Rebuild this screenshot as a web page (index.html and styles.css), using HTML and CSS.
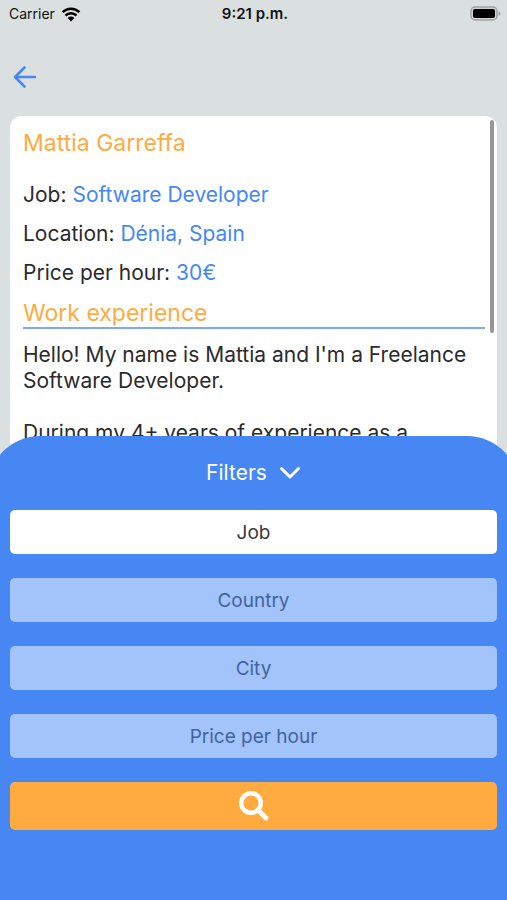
FILE: index.html
```html
<!DOCTYPE html>
<html lang="en">
<head>
<meta charset="utf-8">
<meta name="viewport" content="width=device-width, initial-scale=1">
<title>Profile</title>
<link rel="stylesheet" href="styles.css">
</head>
<body>
<div class="screen">
  <div class="status">
    <div class="carrier">Carrier
      <svg width="20" height="15" viewBox="0 0 20 15" aria-hidden="true"><g fill="none" stroke="#000" stroke-width="2.5"><path d="M1.6 5.2a12 12 0 0 1 16.8 0"/><path d="M4.5 8.5a8 8 0 0 1 11 0"/></g><path d="M6.7 11a5 5 0 0 1 6.6 0L10 14.5z"/></svg>
    </div>
    <time class="clock">9:21 p.m.</time>
    <svg class="battery" width="31" height="16" viewBox="0 0 31 16" aria-hidden="true"><rect x="1" y="1" width="26" height="13" rx="4" fill="#cfd2d1" stroke="#a3a5a5" stroke-width="1.5"/><rect x="3" y="3" width="22" height="9" rx="2"/><path d="M28.500 5q2 1 2 2.500t-2 2.500z" fill="#a3a5a5"/></svg>
  </div>
  <nav class="nav">
    <button class="back" type="button" aria-label="Back">
      <svg width="24" height="24" viewBox="0 0 24 24" fill="none" stroke="#4687f4" stroke-width="2.600" stroke-linecap="round" stroke-linejoin="round"><path d="M11.500 2.500 2 12l9.500 9.500M2 12h20"/></svg>
    </button>
  </nav>
  <main class="card">
    <h1 class="heading">Mattia Garreffa</h1>
    <dl class="facts">
      <div><dt>Job:</dt> <dd>Software Developer</dd></div>
      <div><dt>Location:</dt> <dd>Dénia, Spain</dd></div>
      <div><dt>Price per hour:</dt> <dd>30€</dd></div>
    </dl>
    <h2 class="heading section">Work experience</h2>
    <p>Hello! My name is Mattia and I'm a Freelance Software Developer.</p>
    <p>During my 4+ years of experience as a</p>
    <span class="scrollbar"></span>
  </main>
  <form class="sheet">
    <button class="toggle" type="button">Filters
      <svg width="22" height="14" viewBox="0 0 22 14" fill="none" stroke="#fff" stroke-width="3" stroke-linecap="round" stroke-linejoin="round" aria-hidden="true"><path d="m2.500 2.500 8.500 8.500 8.500-8.500"/></svg>
    </button>
    <input class="field" type="text" aria-label="Job" placeholder="Job">
    <input class="field" type="text" aria-label="Country" placeholder="Country" disabled>
    <input class="field" type="text" aria-label="City" placeholder="City" disabled>
    <input class="field" type="text" aria-label="Price per hour" placeholder="Price per hour" disabled>
    <button class="search" type="submit" aria-label="Search">
      <svg width="32" height="32" viewBox="0 0 32 32" fill="none" stroke="#fff"><circle cx="13" cy="13" r="9.800" stroke-width="4.400"/><path d="m20.500 20.500 7.500 7.500" stroke-width="5" stroke-linecap="round"/></svg>
    </button>
  </form>
</div>
</body>
</html>
```
FILE: styles.css
```css
* { box-sizing: border-box; }
body {
  margin: 0;
  font-family: Inter, "Liberation Sans", sans-serif;
  font-size: 21px;
  line-height: 26px;
  color: #2b2b2b;
}
button, input { font: inherit; border: 0; margin: 0; }
button { padding: 0; background: none; cursor: pointer; }
svg { display: block; }
.screen {
  display: flex;
  flex-direction: column;
  height: 100vh;
  overflow: hidden;
  background: #dae0df;
}
.status {
  display: grid;
  grid-template-columns: 1fr auto 1fr;
  align-items: center;
  height: 28px;
  flex: none;
  padding: 0 6px 0 9px;
  font-size: 14px;
  color: #111;
}
.carrier { display: flex; align-items: center; gap: 6px; }
.clock { font-size: 15px; font-weight: 600; }
.battery { justify-self: end; }
.nav { display: flex; align-items: center; flex: none; height: 88px; padding: 10px 13px 0; }
.card {
  position: relative;
  flex: 1;
  min-height: 0;
  overflow: hidden;
  margin: 0 10px;
  padding: 13px 12px 0 13px;
  background: #fff;
  border-radius: 12px;
}
.heading { margin: 0; font-size: 23px; font-weight: 400; line-height: 28px; color: #ffab40; }
.facts { display: grid; gap: 13px; margin: 25px 0 13px; }
.facts dt, .facts dd { display: inline; margin: 0; }
.facts dd { color: #4687f4; }
.section { border-bottom: 2px solid #7ba9f7; }
.card p { margin: 0 0 26px; }
.section + p { margin-top: 13px; }
.scrollbar {
  position: absolute;
  top: 4px;
  right: 3px;
  width: 4px;
  height: 213px;
  border-radius: 2px;
  background: #969696;
}
.sheet {
  position: relative;
  display: flex;
  flex-direction: column;
  flex: none;
  gap: 24px;
  margin: -24px -12px 0;
  padding: 24px 22px 70px;
  background: #4687f4;
  border-radius: 52px 52px 0 0;
}
.toggle { display: flex; align-items: center; align-self: center; gap: 12px; color: #fff; }
.field {
  width: 100%;
  height: 44px;
  padding: 0 12px;
  border-radius: 5px;
  background: #fff;
  font-size: 19px;
  text-align: center;
}
.field::placeholder { color: #3a3a3a; opacity: 1; }
.field:disabled { background: #a3c4fa; }
.field:disabled::placeholder { color: #41639f; }
.search {
  display: flex;
  align-items: center;
  justify-content: center;
  height: 48px;
  border-radius: 5px;
  background: #ffab40;
}
```
